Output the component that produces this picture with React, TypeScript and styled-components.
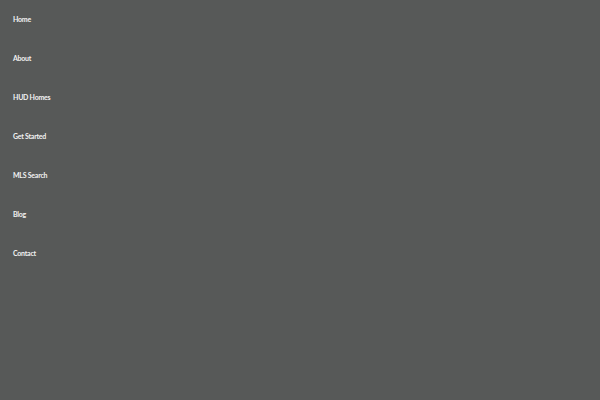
import React from "react";
import styled, { createGlobalStyle } from "styled-components";

const GlobalStyle = createGlobalStyle`
  html, body {
    margin: 0;
    padding: 0;
    background: #575958;
  }
  #root {
    min-height: 100vh;
  }
`;

const Page = styled.div`
  width: 600px;
  height: 400px;
  background: #575958;
  overflow: hidden;
`;

const Menu = styled.ul`
  list-style: none;
  margin: -3px 0 0;
  padding: 0 0 0 13px;
  display: flex;
  flex-direction: column;
`;

const MenuItem = styled.li`
  height: 39px;
  line-height: 39px;
`;

const MenuLink = styled.a`
  font-family: Lato, "Open Sans", sans-serif;
  font-size: 7px;
  font-weight: 700;
  color: #f2f2f2;
  text-decoration: none;
  letter-spacing: -0.25px;
`;

const links = ["Home", "About", "HUD Homes", "Get Started", "MLS Search", "Blog", "Contact"];

const App = () => {
  return (
    <Page>
      <GlobalStyle />
      <Menu>
        {links.map((label) => (
          <MenuItem key={label}>
            <MenuLink href="#">{label}</MenuLink>
          </MenuItem>
        ))}
      </Menu>
    </Page>
  );
};

export default App;
